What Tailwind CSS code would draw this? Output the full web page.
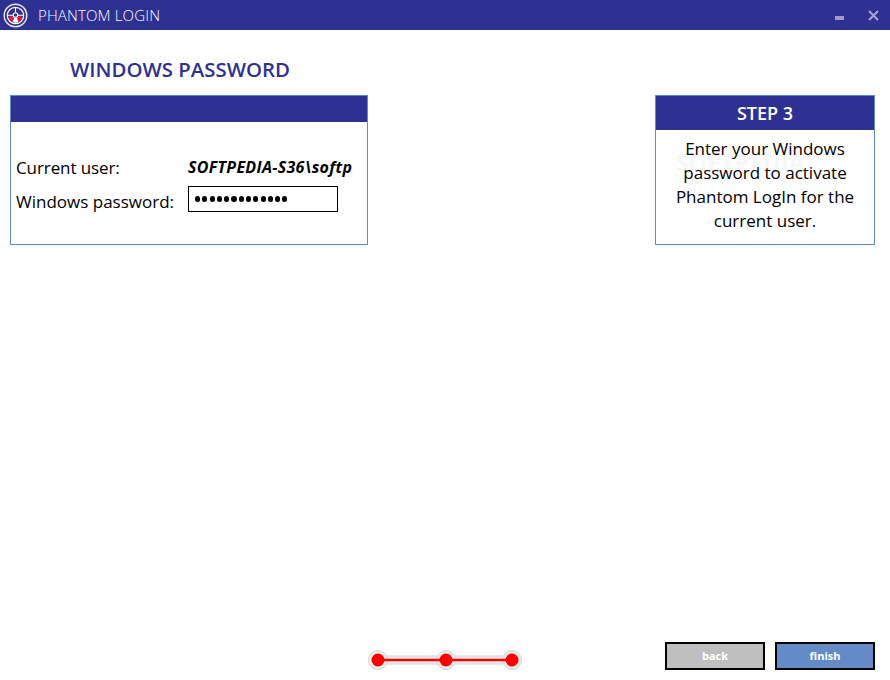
<!DOCTYPE html>
<html lang="en">
  <head>
    <meta charset="UTF-8" />
    <title>Phantom Login</title>
    <script src="https://cdn.jsdelivr.net/npm/@tailwindcss/browser@4"></script>
  </head>
  <body class="bg-white font-['Open_Sans',sans-serif] text-black">
    <div class="h-[680px] w-[890px] flex flex-col overflow-hidden">
      <!-- title bar -->
      <div class="h-[30px] bg-[#2e3192] flex items-center pl-[3px] pr-[11px] shrink-0">
        <svg class="w-[25px] h-[25px]" viewBox="0 0 25 25">
          <circle cx="12.5" cy="12.5" r="11.3" fill="none" stroke="#e8e8f4" stroke-width="1.4" />
          <circle cx="12.5" cy="12.5" r="8.2" fill="#2e3192" stroke="#fff" stroke-width="1.2" />
          <path d="M5.4 13.500h14.200a7.100 7.100 0 0 1-4.200 5.500L13.800 15h-2.600L9.600 19A7.100 7.100 0 0 1 5.400 13.500z" fill="#ed1c24" />
          <path d="M11.200 15h2.600l1.600 4a7.100 7.100 0 0 1-5.800 0z" fill="#fff" />
          <path d="M5 12.300h15M12.500 4.800v5" stroke="#fff" stroke-width="1.100" />
          <circle cx="12.500" cy="12" r="2.300" fill="#2e3192" stroke="#fff" stroke-width="1.100" />
        </svg>
        <span class="ml-[10px] text-[15px] font-light text-white tracking-[0.15px]">PHANTOM LOGIN</span>
        <div class="ml-auto flex items-center gap-[24px]">
          <div class="w-[9px] h-[4px] mt-[5px] bg-[#9c9dcc]"></div>
          <svg class="w-[11px] h-[11px]" viewBox="0 0 11 11">
            <path d="M1 1l9 9M10 1l-9 9" stroke="#a5a6d1" stroke-width="2" />
          </svg>
        </div>
      </div>

      <h1 class="mt-[26px] mb-[1px] ml-[70px] h-[26px] text-[20.400px] leading-[26px] font-semibold text-[#2e3192]">WINDOWS PASSWORD</h1>

      <div class="mt-[12px] pl-[10px] pr-[15px] flex justify-between items-start">
        <!-- password panel -->
        <div class="w-[358px] h-[150px] border border-[#5f89c9]">
          <div class="h-[26px] bg-[#2e3192]"></div>
          <div class="pl-[5px] pt-[34px]">
            <div class="flex items-center h-[24px]">
              <span class="w-[172px] text-[17px] tracking-[-0.1px]">Current user:</span>
              <span class="text-[16px] font-bold italic tracking-[0.3px] -mt-[3px]">SOFTPEDIA-S36\softp</span>
            </div>
            <div class="flex items-center h-[30px] mt-[6px]">
              <span class="w-[172px] text-[17px] pt-[1px]">Windows password:</span>
              <div class="w-[150px] h-[26px] border border-black pl-[6px] flex items-center gap-[2.200px] -mt-[4px]">
                <i class="size-[5.100px] rounded-full bg-black"></i><i class="size-[5.100px] rounded-full bg-black"></i><i class="size-[5.100px] rounded-full bg-black"></i><i class="size-[5.100px] rounded-full bg-black"></i><i class="size-[5.100px] rounded-full bg-black"></i><i class="size-[5.100px] rounded-full bg-black"></i><i class="size-[5.100px] rounded-full bg-black"></i><i class="size-[5.100px] rounded-full bg-black"></i><i class="size-[5.100px] rounded-full bg-black"></i><i class="size-[5.100px] rounded-full bg-black"></i><i class="size-[5.100px] rounded-full bg-black"></i><i class="size-[5.100px] rounded-full bg-black"></i><i class="size-[5.100px] rounded-full bg-black"></i>
              </div>
            </div>
          </div>
        </div>

        <!-- step panel -->
        <div class="w-[220px] h-[150px] border border-[#5f89c9]">
          <div class="h-[34px] bg-[#2e3192] text-white text-center text-[18px] leading-[35px] font-semibold">STEP 3</div>
          <div class="relative text-center text-[17px] leading-[24px] pt-[7px]">
            <span class="absolute left-[19px] top-[17px] text-[24px] leading-[30px] font-bold text-[#f7f7f7]">SOFTPEDIA</span>
            <p class="relative">Enter your Windows<br />password to activate<br />Phantom LogIn for the<br />current user.</p>
          </div>
        </div>
      </div>

      <!-- footer -->
      <div class="mt-auto mb-[10px] pr-[15px] grid grid-cols-[1fr_auto_1fr] items-end">
        <div></div>
        <svg class="w-[156px] h-[22px] ml-[15px] -mb-[1px]" viewBox="0 0 156 22">
          <path d="M11 11H145" stroke="#d6d6d6" stroke-width="9" />
          <path d="M11 11H145" stroke="#ececec" stroke-width="7" />
          <circle cx="11" cy="11" r="9.500" fill="#ececec" stroke="#d6d6d6" />
          <circle cx="79" cy="11" r="9.500" fill="#ececec" stroke="#d6d6d6" />
          <circle cx="145" cy="11" r="9.500" fill="#ececec" stroke="#d6d6d6" />
          <path d="M11 11H145" stroke="#ff0000" stroke-width="2.500" />
          <circle cx="11" cy="11" r="6.500" fill="#ff0000" />
          <circle cx="79" cy="11" r="6.500" fill="#ff0000" />
          <circle cx="145" cy="11" r="6.500" fill="#ff0000" />
        </svg>
        <div class="flex justify-end gap-[10px]">
          <button class="w-[100px] h-[28px] border-2 border-black bg-[#bfbfbf] text-white text-[11px] font-bold">back</button>
          <button class="w-[100px] h-[28px] border-2 border-black bg-[#638bc8] text-white text-[11px] font-bold">finish</button>
        </div>
      </div>
    </div>
  </body>
</html>
